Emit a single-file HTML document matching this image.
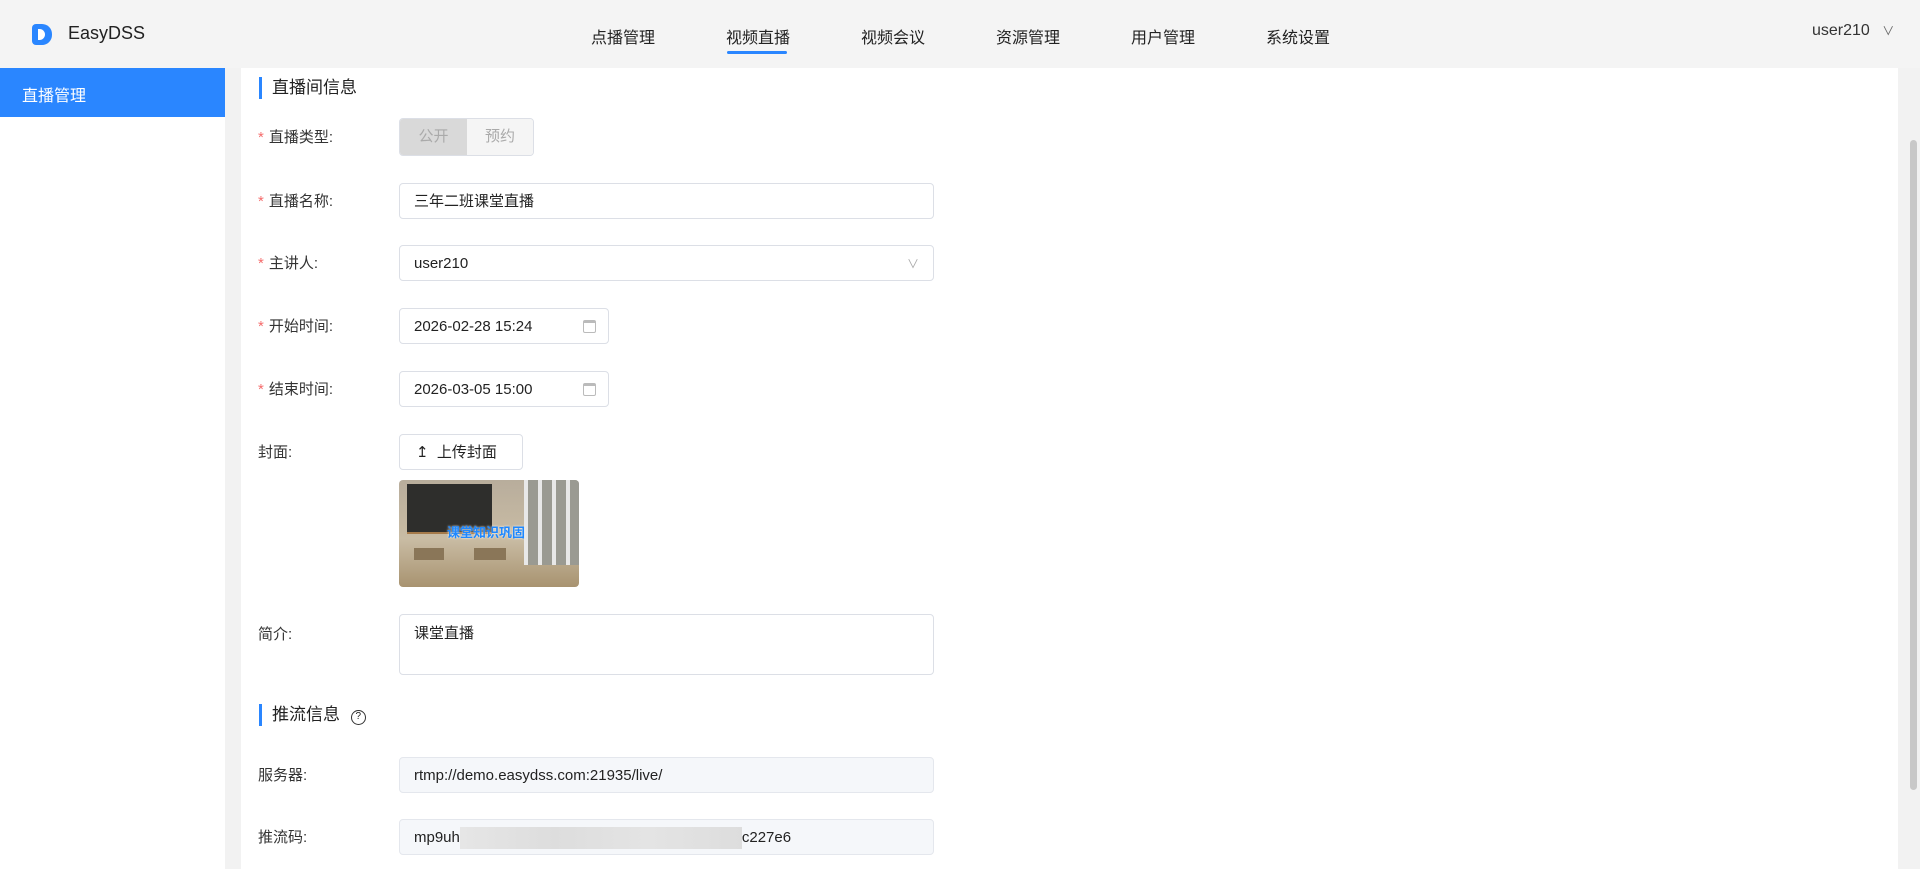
<!DOCTYPE html>
<html><head><meta charset="utf-8"><style>
*{box-sizing:border-box;margin:0;padding:0}
body{width:1920px;height:869px;overflow:hidden;background:#f2f2f2;font-family:"Liberation Sans","Noto Sans CJK SC",sans-serif;color:#333;font-size:15px;position:relative}
.hdr{position:absolute;left:0;top:0;width:1920px;height:68px;background:#f4f4f4}
.logo{position:absolute;left:32px;top:24px;width:20px;height:21px;background:#2a86ff;border-radius:4px 10px 10px 4px}
.logo:after{content:"";position:absolute;left:6px;top:5px;width:7px;height:11px;background:#fff;border-radius:0 6px 6px 0}
.brand{position:absolute;left:68px;top:23px;font-size:18px;color:#222}
.nav{position:absolute;top:24px;font-size:16px;color:#222}
.ul{position:absolute;left:727px;top:51px;width:60px;height:3px;background:#2a86ff;border-radius:2px}
.user{position:absolute;left:1812px;top:22px;font-size:16px;color:#333}
.side{position:absolute;left:0;top:68px;width:225px;height:801px;background:#fff}
.act{position:absolute;left:0;top:68px;width:225px;height:49px;background:#2a86ff;color:#fff;font-size:16px;padding:14px 0 0 22px}
.main{position:absolute;left:241px;top:68px;width:1657px;height:801px;background:#fff}
.sb{position:absolute;left:1910px;top:140px;width:7px;height:650px;background:#c8c8c8;border-radius:4px}
.ttl{position:absolute;left:259px;font-size:17px;color:#222;border-left:3px solid #2a86ff;padding-left:10px;height:22px;line-height:22px}
.lbl{position:absolute;left:258px;color:#333}
.lbl b{color:#f56c6c;font-weight:normal;margin-right:5px}
.inp{position:absolute;left:399px;width:535px;height:36px;border:1px solid #dcdfe6;border-radius:4px;padding:0 14px;line-height:36px;color:#222;background:#fff}
.dis{background:#f5f7fa;border-color:#e4e7ed}
</style></head><body>
<div class="hdr">
<div class="logo"></div><div class="brand">EasyDSS</div>
<div class="nav" style="left:591px">点播管理</div>
<div class="nav" style="left:726px">视频直播</div>
<div class="nav" style="left:861px">视频会议</div>
<div class="nav" style="left:996px">资源管理</div>
<div class="nav" style="left:1131px">用户管理</div>
<div class="nav" style="left:1266px">系统设置</div>
<div class="ul"></div>
<div class="user">user210 <span style="font-size:12px;color:#666;margin-left:8px">&#8744;</span></div>
</div>
<div class="side"></div><div class="act">直播管理</div>
<div class="main"></div>
<div class="sb"></div>

<div class="ttl" style="top:77px">直播间信息</div>
<div class="lbl" style="top:126px"><b>*</b>直播类型:</div>
<div style="position:absolute;left:399px;top:118px;width:135px;height:38px;border:1px solid #dcdfe6;border-radius:4px;overflow:hidden;display:flex;font-size:15px;color:#aaa">
<div style="width:67px;background:#d9d9d9;text-align:center;line-height:36px">公开</div><div style="flex:1;background:#f5f5f5;text-align:center;line-height:36px">预约</div></div>

<div class="lbl" style="top:190px"><b>*</b>直播名称:</div>
<div class="inp" style="top:183px">三年二班课堂直播</div>
<div class="lbl" style="top:252px"><b>*</b>主讲人:</div>
<div class="inp" style="top:245px">user210<span style="position:absolute;right:14px;color:#aaa;font-size:12px">&#8744;</span></div>
<div class="lbl" style="top:315px"><b>*</b>开始时间:</div>
<div class="inp" style="top:308px;width:210px">2026-02-28 15:24<span style="position:absolute;right:12px;top:11px;width:13px;height:13px;border:1px solid #bbb;border-top-width:3px;border-radius:2px"></span></div>
<div class="lbl" style="top:378px"><b>*</b>结束时间:</div>
<div class="inp" style="top:371px;width:210px">2026-03-05 15:00<span style="position:absolute;right:12px;top:11px;width:13px;height:13px;border:1px solid #bbb;border-top-width:3px;border-radius:2px"></span></div>
<div class="lbl" style="top:441px">封面:</div>
<div class="inp" style="top:434px;width:124px;padding:0 0 0 16px">&#8613;&nbsp; 上传封面</div>
<div style="position:absolute;left:399px;top:480px;width:180px;height:107px;border-radius:4px;overflow:hidden;background:linear-gradient(180deg,#b8ad9c 0%,#c9bca4 55%,#a89370 100%)">
<div style="position:absolute;left:8px;top:4px;width:85px;height:50px;background:#2e2e2c;border-bottom:2px solid #a57a4a"></div>
<div style="position:absolute;left:125px;top:0;width:55px;height:85px;background:repeating-linear-gradient(90deg,#e8e8e8 0 4px,#9a9a92 4px 14px)"></div>
<div style="position:absolute;left:15px;top:68px;width:30px;height:12px;background:#8a7658"></div>
<div style="position:absolute;left:75px;top:68px;width:32px;height:12px;background:#8a7658"></div>
<div style="position:absolute;left:48px;top:42px;color:#1e88ff;font-size:13px;font-weight:bold;text-shadow:0 0 2px #fff">课堂知识巩固</div>
</div>
<div class="lbl" style="top:623px">简介:</div>
<div class="inp" style="top:614px;height:61px;line-height:1.3;padding-top:9px">课堂直播</div>

<div class="ttl" style="top:704px">推流信息 <span style="display:inline-block;width:15px;height:15px;border:1.5px solid #333;border-radius:50%;font-size:10px;line-height:12px;text-align:center;margin-left:6px;vertical-align:1px">?</span></div>
<div class="lbl" style="top:764px">服务器:</div>
<div class="inp dis" style="top:757px">rtmp://demo.easydss.com:21935/live/</div>
<div class="lbl" style="top:826px">推流码:</div>
<div class="inp dis" style="top:819px">mp9uh<span style="display:inline-block;width:282px;height:22px;background:linear-gradient(90deg,#e6e6e6,#ddd,#e4e4e4,#ddd);vertical-align:middle"></span>c227e6</div>
</body></html>
